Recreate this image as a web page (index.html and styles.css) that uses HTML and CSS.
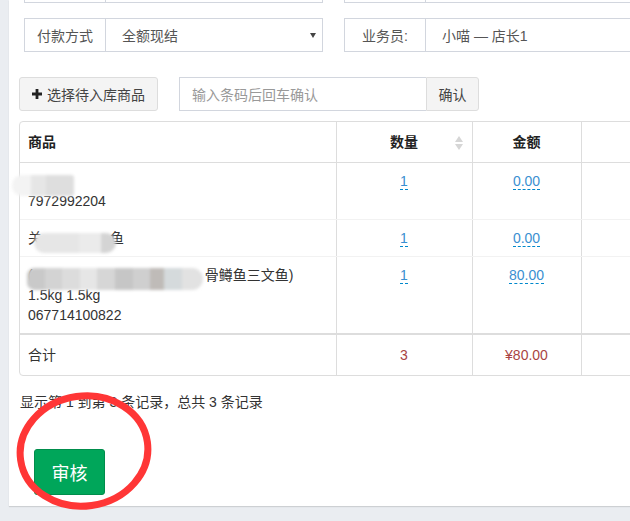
FILE: index.html
```html
<!DOCTYPE html>
<html>
<head>
<meta charset="utf-8">
<link rel="stylesheet" href="styles.css">
</head>
<body>
<div class="panel">
  <div class="form-row cut-row">
    <div class="group"><span class="addon"></span><span class="field"></span></div>
    <div class="group"><span class="addon"></span><span class="field"></span></div>
  </div>
  <div class="form-row">
    <div class="group">
      <span class="addon">付款方式</span>
      <span class="field select">全额现结<i class="caret"></i></span>
    </div>
    <div class="group">
      <span class="addon">业务员:</span>
      <span class="field">小喵 — 店长1</span>
    </div>
  </div>
  <div class="tool-row">
    <button class="btn"><svg class="plus" width="10" height="10" viewBox="0 0 10 10"><path d="M3.6 0h2.8v3.6H10v2.8H6.4V10H3.6V6.4H0V3.6h3.6z" fill="#222"/></svg>选择待入库商品</button>
    <div class="scan">
      <span class="scan-input">输入条码后回车确认</span>
      <button class="btn scan-btn">确认</button>
    </div>
  </div>
  <div class="table-wrap">
    <table class="grid">
      <colgroup><col class="c1"><col class="c2"><col class="c3"><col class="c4"></colgroup>
      <thead>
        <tr>
          <th class="left">商品</th>
          <th class="sortable">数量<svg class="sort" width="8" height="14" viewBox="0 0 8 14"><path d="M4 0L8 6H0z M4 14L0 8h8z" fill="#d6d6d6"/></svg></th>
          <th>金额</th>
          <th></th>
        </tr>
      </thead>
      <tbody>
        <tr>
          <td class="left"><span class="blur b1"></span><br>7972992204</td>
          <td><a class="ed">1</a></td>
          <td><a class="ed">0.00</a></td>
          <td></td>
        </tr>
        <tr>
          <td class="left">关<span class="blur b2"></span>鱼</td>
          <td><a class="ed">1</a></td>
          <td><a class="ed">0.00</a></td>
          <td></td>
        </tr>
        <tr>
          <td class="left">(<span class="blur b3"></span>骨鳟鱼三文鱼)<br>1.5kg 1.5kg<br>067714100822</td>
          <td><a class="ed">1</a></td>
          <td><a class="ed">80.00</a></td>
          <td></td>
        </tr>
      </tbody>
      <tfoot>
        <tr>
          <td class="left">合计</td>
          <td class="sum">3</td>
          <td class="sum">¥80.00</td>
          <td></td>
        </tr>
      </tfoot>
    </table>
  </div>
  <div class="pager">显示第 1 到第 3 条记录，总共 3 条记录</div>
  <button class="audit">审核</button>
</div>
<svg class="mark" width="160" height="140" viewBox="0 0 160 140">
  <ellipse cx="84" cy="71" rx="64" ry="55" transform="rotate(-8 84 71)" fill="none" stroke="#ff3636" stroke-width="7"/>
</svg>
</body>
</html>
```
FILE: styles.css
```css
html, body {
  margin: 0;
  padding: 0;
  overflow: hidden;
  height: 521px;
}
body {
  background: #eaedf1;
  font-family: "Liberation Sans", "Noto Sans CJK SC", sans-serif;
  font-size: 14px;
  color: #333;
  position: relative;
}
.panel {
  margin-left: 9px;
  width: 700px;
  background: #fff;
  box-shadow: 0 1px 1px rgba(0,0,0,0.12);
  padding: 0 10px 11px 10px;
  box-sizing: border-box;
  overflow: hidden;
}
.form-row {
  display: flex;
  gap: 21px;
  padding-left: 5px;
  margin-bottom: 25px;
}
.cut-row {
  margin-top: -31px;
  margin-bottom: 15px;
}
.group {
  display: flex;
  width: 299px;
  height: 34px;
  border: 1px solid #d2d6de;
  box-sizing: border-box;
}
.addon {
  width: 80px;
  flex: none;
  border-right: 1px solid #d2d6de;
  display: flex;
  align-items: center;
  justify-content: center;
  color: #555;
}
.field {
  flex: 1;
  display: flex;
  align-items: center;
  padding-left: 16px;
  color: #555;
  position: relative;
}
.caret {
  position: absolute;
  right: 6px;
  top: 14px;
  width: 0;
  height: 0;
  border-left: 3px solid transparent;
  border-right: 3px solid transparent;
  border-top: 5px solid #444;
}
.tool-row {
  display: flex;
  gap: 21px;
  height: 34px;
  margin-bottom: 10px;
}
.btn {
  font-family: inherit;
  font-size: 14px;
  color: #444;
  background: #f4f4f4;
  border: 1px solid #ddd;
  border-radius: 3px;
  height: 34px;
  padding: 0 12px;
  display: flex;
  align-items: center;
  box-sizing: border-box;
}
.btn:first-child {
  width: 139px;
}
.plus {
  margin-right: 5px;
}
.scan {
  display: flex;
}
.scan-input {
  width: 247px;
  height: 34px;
  box-sizing: border-box;
  border: 1px solid #d2d6de;
  border-right: none;
  padding-left: 12px;
  display: flex;
  align-items: center;
  color: #999;
}
.scan-btn {
  width: 53px;
  border-radius: 0 3px 3px 0;
  justify-content: center;
  padding: 0;
}
.table-wrap {
  border: 1px solid #ddd;
  border-radius: 4px;
  width: 680px;
}
.grid {
  border-collapse: collapse;
  table-layout: fixed;
  width: 100%;
}
.c1 { width: 316px; }
.c2 { width: 136px; }
.c3 { width: 109px; }
.c4 { width: auto; }
.grid th, .grid td {
  line-height: 20px;
  text-align: center;
  border-left: 1px solid #ddd;
  vertical-align: top;
}
.grid th:first-child, .grid td:first-child {
  border-left: none;
}
.grid th {
  padding: 10px 8px;
  font-weight: bold;
  color: #222;
  border-bottom: 1px solid #ddd;
}
.grid th.sortable {
  position: relative;
}
.sort {
  position: absolute;
  right: 9px;
  top: 14px;
}
.grid td {
  padding: 8px;
  border-bottom: 1px solid #f2f2f2;
}
.grid td.left {
  text-align: left;
  height: 20px;
}
.grid th.left {
  text-align: left;
}
.grid tfoot td {
  padding: 10px 8px;
  border-top: 2px solid #ddd;
  border-bottom: none;
}
.grid td.sum {
  color: #a94442;
}
.ed {
  color: #3a8fd1;
  text-decoration: none;
  border-bottom: 1px dashed #0088cc;
}
.blur {
  display: inline-block;
  vertical-align: -4px;
  filter: blur(1.5px);
  position: relative;
  margin-top: -6px;
  margin-bottom: -6px;
}
.b1 {
  width: 62px;
  height: 21px;
  margin-left: -16px;
  background: linear-gradient(90deg, #f3f3f3 0 30%, #e6e6e6 30% 55%, #dedede 55% 100%);
  border-radius: 10px 3px 3px 10px;
}
.b2 {
  width: 82px;
  height: 20px;
  margin-left: -8px;
  margin-right: -6px;
  background: linear-gradient(90deg, #e6e6e6 0 55%, #ebebeb 55% 82%, #d4d4d4 82% 100%);
  border-radius: 10px;
}
.b3 {
  width: 176px;
  height: 22px;
  margin-left: -6px;
  margin-right: 2px;
  background: linear-gradient(90deg, #c9c9c9 0 10%, #d3d3d3 10% 20%, #dcdcdc 20% 30%, #e6e6e6 30% 40%, #d6d6d6 40% 50%, #c6c6c6 50% 60%, #cfcfcf 60% 70%, #bfbbb8 70% 78%, #d5dadc 78% 88%, #e2e2e2 88% 100%);
  border-radius: 8px 12px 12px 8px;
}
.pager {
  margin-top: 16px;
  line-height: 20px;
  font-size: 14px;
  color: #333;
  padding-left: 1px;
}
.audit {
  display: block;
  margin: 37px 0 0 15px;
  width: 71px;
  height: 46px;
  background: #00a65a;
  border: 1px solid #008d4c;
  border-radius: 3px;
  color: #fff;
  font-family: inherit;
  font-size: 18px;
  padding: 0;
}
.mark {
  position: absolute;
  left: 0;
  top: 380px;
}
```
